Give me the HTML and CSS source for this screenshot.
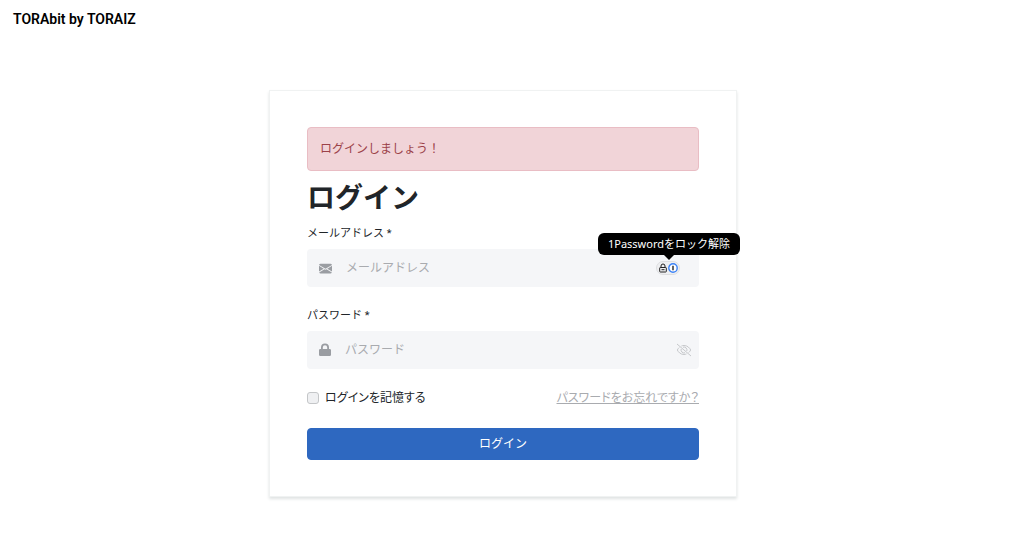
FILE: index.html
```
<!DOCTYPE html>
<html lang="ja">
  <head>
    <meta charset="UTF-8" />
    <meta name="viewport" content="width=device-width, initial-scale=1.0" />
    <title>ログイン</title>

    <link rel="stylesheet" href="styles.css">
  </head>
  <body>
    <header class="header">
      <a class="header__brand" href="#">TORAbit by TORAIZ</a>
    </header>

    <main class="main">
      <section class="card">
        <div class="alert" role="alert">ログインしましょう！</div>
        <h1 class="card__title">ログイン</h1>

        <form action="#">
          <div class="field">
            <label class="field__label" for="email">メールアドレス *</label>
            <div class="field__box">
              <svg class="field__icon" viewBox="0 0 16 16" aria-hidden="true">
                <path d="M.05 3.555A2 2 0 0 1 2 2h12a2 2 0 0 1 1.95 1.555L8 8.414zM0 4.697v7.104l5.803-3.558zM6.761 8.83l-6.57 4.027A2 2 0 0 0 2 14h12a2 2 0 0 0 1.808-1.144l-6.57-4.027L8 9.586zm3.436-.586L16 11.801V4.697z" />
              </svg>
              <input class="field__input" type="email" id="email" placeholder="メールアドレス" />
              <button class="unlock" type="button" aria-label="1Password">
                <svg class="unlock__lock" viewBox="0 0 10 10" aria-hidden="true">
                  <path d="M3 4.500V3a2 2 0 0 1 4 0v1.500" />
                  <rect x="1.700" y="4.500" width="6.600" height="4.500" rx=".6" />
                  <path d="M3.500 6.700h3" />
                </svg>
                <svg class="unlock__logo" viewBox="0 0 10 10" aria-hidden="true">
                  <circle cx="5" cy="5" r="4.200" />
                  <path d="M5 2.800v4.400" />
                </svg>
              </button>
              <div class="tooltip" role="tooltip">1Passwordをロック解除</div>
            </div>
          </div>

          <div class="field">
            <label class="field__label" for="password">パスワード *</label>
            <div class="field__box">
              <svg class="field__icon field__icon--lock" viewBox="0 0 12 14" aria-hidden="true">
                <path d="M2 6V4.500a4 4 0 0 1 8 0V6h.7A1.300 1.300 0 0 1 12 7.300v4.400a1.300 1.300 0 0 1-1.300 1.300H1.300A1.300 1.300 0 0 1 0 11.700V7.300A1.300 1.300 0 0 1 1.300 6zm1.800 0h4.400V4.500a2.200 2.200 0 0 0-4.400 0z" />
              </svg>
              <input class="field__input" type="password" id="password" placeholder="パスワード" />
              <button class="toggle" type="button" aria-label="パスワードを表示">
                <svg class="toggle__icon" viewBox="0 0 16 14" aria-hidden="true">
                  <path d="M5.400 3A7 7 0 0 1 8 2.500c3.500 0 5.700 2.500 6.700 4.500a8 8 0 0 1-2 2.500M10.500 10.900A7 7 0 0 1 8 11.500C4.500 11.500 2.300 9 1.300 7a8 8 0 0 1 2-2.500" />
                  <path d="M7 4.200a3 3 0 0 1 3.800 3.800M9 9.800a3 3 0 0 1-3.800-3.800" />
                  <path d="M1 1l14 12" />
                </svg>
              </button>
            </div>
          </div>

          <div class="options">
            <input class="options__check" type="checkbox" id="remember" />
            <label class="options__label" for="remember">ログインを記憶する</label>
            <a class="options__link" href="#">パスワードをお忘れですか？</a>
          </div>

          <button class="submit" type="submit">ログイン</button>
        </form>
      </section>
    </main>
  </body>
</html>
```
FILE: styles.css
```
* {
  box-sizing: border-box;
}

body {
  margin: 0;
  background: #fff;
  color: #212529;
  font-family: Roboto, "Noto Sans CJK JP", sans-serif;
  font-size: 12px;
  line-height: 18px;
}

button,
input {
  font: inherit;
}

.header {
  padding: 10px 13px;
}

.header__brand {
  color: #000;
  font-size: 14px;
  font-weight: 600;
  text-decoration: none;
}

.main {
  padding: 51px 18px 44px 0;
}

.card {
  max-width: 468px;
  margin: 0 auto;
  padding: 36px 37px;
  border: 1px solid #f0f2f2;
  box-shadow: 0 2px 3px #dfe3e3;
}

.alert {
  padding: 12px;
  border: 1px solid #e9bdc4;
  border-radius: 4px;
  background: #f1d4d8;
  color: #9c4249;
}

.card__title {
  margin: 10px 0 8px;
  font-size: 28px;
  font-weight: 700;
  line-height: 36px;
}

.field {
  margin-bottom: 20px;
}

.field__label {
  display: block;
  margin-bottom: 6px;
  font-size: 11px;
}

.field__box {
  position: relative;
  display: flex;
  align-items: center;
  height: 38px;
  padding: 0 7px 0 12px;
  border-radius: 4px;
  background: #f5f6f8;
}

.field__icon {
  flex: none;
  width: 13px;
  height: 13px;
  fill: #9a9da2;
}

.field__icon--lock {
  width: 12px;
  height: 14px;
}

.field__input {
  flex: 1;
  min-width: 0;
  padding: 0 14px;
  border: 0;
  outline: 0;
  background: transparent;
}

.field__input::placeholder {
  color: #a9abaf;
}

.unlock {
  display: flex;
  align-items: center;
  height: 14px;
  margin-right: 12px;
  padding: 0 1px;
  border: 1px solid #dedfe1;
  border-radius: 7px;
  background: #eeeff1;
}

.unlock__lock,
.unlock__logo {
  width: 10px;
  height: 10px;
  fill: none;
  stroke: #222;
}

.unlock__logo {
  stroke-width: 1.4;
}

.unlock__logo circle {
  fill: #fff;
  stroke: #3b82f6;
}

.tooltip {
  position: absolute;
  right: -41px;
  bottom: 32px;
  padding: 2px 10px;
  border-radius: 6px;
  background: #000;
  color: #fff;
  font-family: "Noto Sans", "Noto Sans CJK JP", sans-serif;
  font-size: 11px;
  white-space: nowrap;
}

.tooltip::after {
  content: "";
  position: absolute;
  top: 100%;
  left: 50%;
  margin-left: -5px;
  border: 5px solid transparent;
  border-top-color: #000;
}

.toggle {
  display: flex;
  padding: 0;
  border: 0;
  background: none;
}

.toggle__icon {
  width: 16px;
  height: 14px;
  fill: none;
  stroke: #c6c8cb;
}

.options {
  display: flex;
  align-items: center;
  margin-bottom: 21px;
  font-feature-settings: "palt";
}

.options__check {
  appearance: none;
  width: 12px;
  height: 12px;
  margin: 0 6px 0 0;
  border: 1px solid #c4c6c8;
  border-radius: 3px;
  background: #eff0f2;
}

.options__check:checked {
  background: #2e68c0;
}

.options__link {
  margin-left: auto;
  color: #a9abaf;
}

.submit {
  display: block;
  width: 100%;
  padding: 6px;
  border: 1px solid #2e68c0;
  border-radius: 4px;
  background: #2e68c0;
  color: #fff;
}
```
